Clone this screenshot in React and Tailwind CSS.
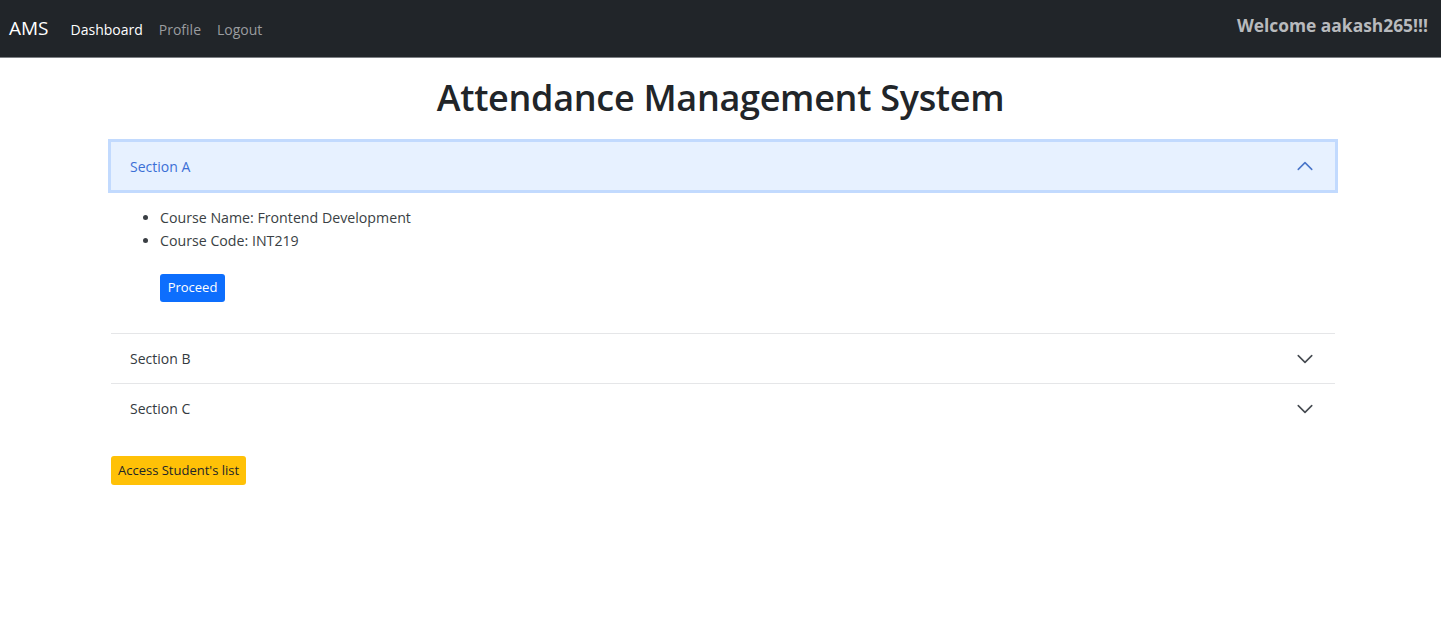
import React, { useState } from 'react';

const font = { fontFamily: '"Open Sans", "Noto Sans", Arial, sans-serif' };

const Chevron = ({ up, className }) => (
  <svg viewBox="0 0 16 16" className={className} fill="none" stroke="currentColor" strokeWidth="1.4" strokeLinecap="round" strokeLinejoin="round">
    {up ? <path d="M2 11l6-6 6 6" /> : <path d="M2 5l6 6 6-6" />}
  </svg>
);

const sections = [
  { id: 'A', name: 'Frontend Development', code: 'INT219' },
  { id: 'B', name: 'Backend Development', code: 'INT220' },
  { id: 'C', name: 'Database Systems', code: 'INT221' },
];

export default function App() {
  const [open, setOpen] = useState('A');

  return (
    <div className="min-h-screen bg-white text-[#212529]" style={font}>
      <nav className="h-[58px] bg-[#212529] border-b border-[#7d8084] flex items-center justify-between pl-[9px] pr-[13px]">
        <div className="flex items-center">
          <span className="text-[19px] text-white mr-[22px]">AMS</span>
          <div className="flex items-center gap-[16px] text-[14px] pt-[1px]">
            <a className="text-white">Dashboard</a>
            <a className="text-[#9a9c9f]">Profile</a>
            <a className="text-[#9a9c9f]">Logout</a>
          </div>
        </div>
        <span className="text-[17.4px] font-bold text-[#b8babd] -mt-[6px]">Welcome aakash265!!!</span>
      </nav>

      <h1 className="text-center text-[36px] font-semibold leading-none pt-[22px] pb-[20px] tracking-[-0.3px]">
        Attendance Management System
      </h1>

      <div className="ml-[111px] mr-[106px]">
        {sections.map((s, i) => {
          const isOpen = open === s.id;
          return (
            <div key={s.id} className={i > 0 ? 'border-t border-[#e5e6e8]' : ''}>
              <button
                onClick={() => setOpen(isOpen ? null : s.id)}
                className={`w-full flex items-center justify-between pl-[19px] pr-[21px] text-left text-[14px] ${
                  isOpen
                    ? 'h-[48px] mt-[6px] bg-[#e7f1ff] text-[#3b6fd6] shadow-[0_0_0_3px_#c2dafe]'
                    : 'h-[49px] text-[#343a40]'
                }`}
              >
                <span>Section {s.id}</span>
                <Chevron up={isOpen} className={`w-[18px] h-[18px] ${isOpen ? 'text-[#4a76c9]' : 'text-[#454a50]'}`} />
              </button>
              {isOpen && (
                <div className="pt-[16px] pb-[31px] pl-[19px]">
                  <ul className="list-disc pl-[30px] text-[14.2px] leading-[23px] text-[#3a3f44]">
                    <li>Course Name: {s.name}</li>
                    <li>Course Code: {s.code}</li>
                  </ul>
                  <button className="ml-[30px] mt-[22px] h-[28px] w-[65px] rounded-[3px] bg-[#0d6efd] text-white text-[13px]">
                    Proceed
                  </button>
                </div>
              )}
            </div>
          );
        })}
        <button className="mt-[23px] h-[29px] px-[7px] rounded-[3px] bg-[#ffc107] text-[#212529] text-[13px]">
          Access Student's list
        </button>
      </div>
    </div>
  );
}
